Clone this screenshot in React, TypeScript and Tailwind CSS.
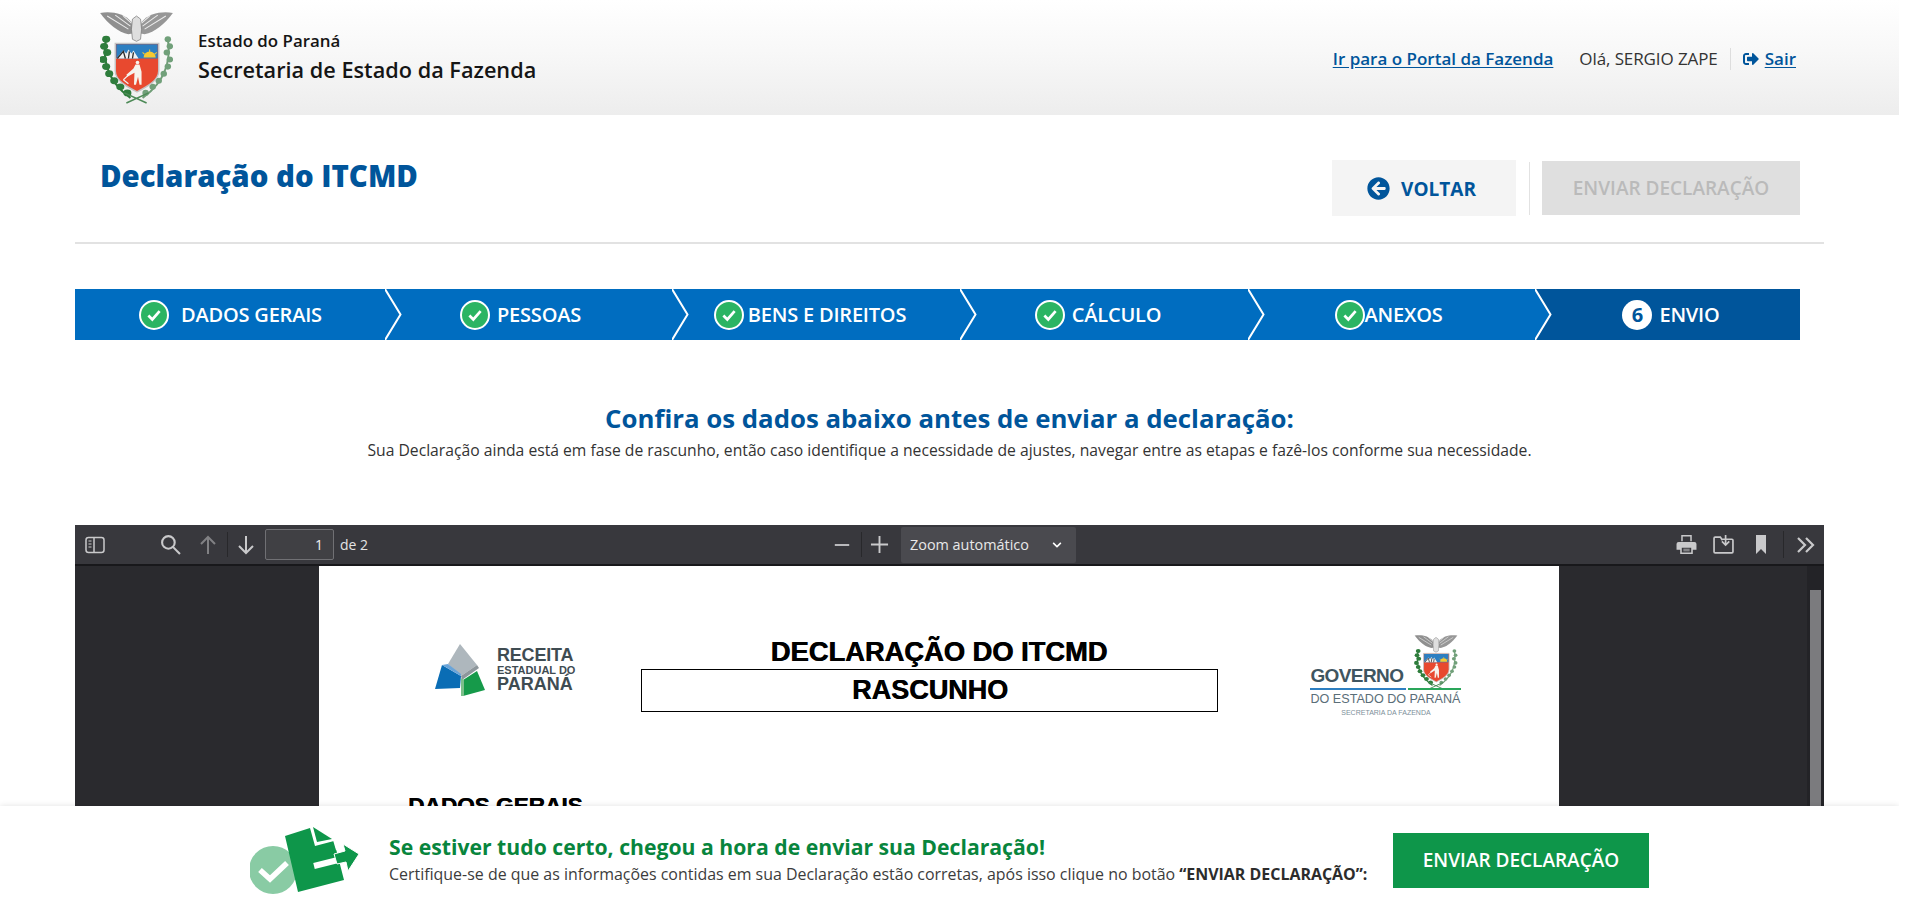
import { FaArrowCircleLeft, FaChevronDown, FaSignOutAlt } from "react-icons/fa";

function Brasao({ className }: { className: string }) {
  return (
    <svg viewBox="0 0 72 91" className={className}>
      {/* aguia */}
      <path d="M0 1 C10 -1 24 1 31 10 L33 21 L28 22 C18 20 8 12 0 1Z" fill="#8f8f8f" />
      <path d="M72 1 C62 -1 48 1 41 10 L39 21 L44 22 C54 20 64 12 72 1Z" fill="#979797" />
      <path d="M7 4 L28 17 M15 3 L30 14 M23 4 L31 11 M65 4 L44 17 M57 3 L42 14 M49 4 L41 11" stroke="#ececec" strokeWidth="1" />
      <path d="M32 7 L36 4 L40 7 L41 17 L40 27 L36 29 L32 27 L31 17Z" fill="#dedede" stroke="#777" strokeWidth="0.7" />
      {/* ramos */}
      <path d="M6 26 C2 45 6 68 30 85" fill="none" stroke="#2f7a3a" strokeWidth="2" />
      <path d="M67 26 C70 45 66 68 42 85" fill="none" stroke="#6f9d76" strokeWidth="2" />
      {[
        [6, 27], [4, 34], [7, 40], [3, 47], [6, 54], [9, 61], [14, 68], [20, 74], [27, 80],
      ].map(([x, y]) => (
        <ellipse key={`${x}-${y}`} cx={x} cy={y} rx="4" ry="3.4" fill="#2e7d3c" />
      ))}
      {[
        [67, 27], [69, 34], [66, 40], [69, 47], [67, 54], [63, 61], [58, 68], [52, 74], [45, 80],
      ].map(([x, y]) => (
        <ellipse key={`${x}-${y}`} cx={x} cy={y} rx="3.2" ry="3" fill="#71a07a" />
      ))}
      <path d="M24 80 L46 90 M48 80 L26 90" stroke="#4d8a57" strokeWidth="1.6" />
      {/* escudo */}
      <path d="M15 31 H58 V58 C58 68 46 74 36.5 79 C27 74 15 68 15 58Z" fill="#e8492f" stroke="#c4c4c4" strokeWidth="1.4" />
      <path d="M16 32 H57 V46 H16Z" fill="#2d7fc1" />
      <path d="M16 46 L23 38 L26 41 L28 37 L31 41 L33 38 L38 46Z" fill="#f2f2f2" />
      <path d="M17 46 L23 39 L25 46 M28 46 L29 39 M32 46 L33 40" stroke="#2c2c2c" strokeWidth="1.3" fill="none" />
      <path d="M43 45 A6 6 0 0 1 55 45Z" fill="#f6c931" />
      <path d="M42 40 L44 42 M49 37 V39.5 M56 40 L54 42" stroke="#f6c931" strokeWidth="1" />
      <circle cx="37" cy="50" r="1.8" fill="#f7f3ec" />
      <path d="M35 52 L39 52 L41 59 L41 72 L39 72 L37.5 64 L35.5 72 L33.5 72 L34 60 L27 64 L26 62 L33 56Z" fill="#f7f3ec" />
      <path d="M23 67 L35 56 M23 67 L28 71" stroke="#f2f2f2" strokeWidth="1.1" />
    </svg>
  );
}

function Check() {
  return (
    <span className="flex h-[30px] w-[30px] shrink-0 items-center justify-center rounded-full border-2 border-white bg-[#2bb463]">
      <svg viewBox="0 0 16 16" className="h-[18px] w-[18px]">
        <path d="M3 8.5 L6.5 12 L13 4.5" fill="none" stroke="#fff" strokeWidth="2.4" />
      </svg>
    </span>
  );
}

function Chevron({ fill }: { fill: string }) {
  return (
    <svg viewBox="0 0 17 51" className="absolute top-0 -right-[16px] z-10 h-[51px] w-[17px]">
      <polygon points="0,0 16,25.5 0,51" className={fill} />
      <polyline points="0,0 15.5,25.5 0,51" fill="none" stroke="#fff" strokeWidth="2" />
    </svg>
  );
}

const steps = [
  { label: "DADOS GERAIS", box: "w-[311px] gap-[12px]" },
  { label: "PESSOAS", box: "w-[287px] gap-[7px] pr-[18px]" },
  { label: "BENS E DIREITOS", box: "w-[288px] gap-[4px] pr-[14px]" },
  { label: "CÁLCULO", box: "w-[288px] gap-[7px] pr-[14px]" },
  { label: "ANEXOS", box: "w-[287px] pr-[8px] -space-x-[1px]" },
];

function Stepper() {
  return (
    <div className="mt-[45px] ml-[75px] flex h-[51px] w-[1725px] font-['Open_Sans',sans-serif] text-[20px] font-semibold tracking-[-0.2px] text-white">
      {steps.map((s) => (
        <div key={s.label} className={`relative flex h-full items-center justify-center bg-[#006dc0] ${s.box}`}>
          <Check />
          <span>{s.label}</span>
          <Chevron fill="fill-[#006dc0]" />
        </div>
      ))}
      <div className="flex h-full flex-1 items-center justify-center gap-[7px] bg-[#00559b] pl-[6px]">
        <span className="flex h-[30px] w-[30px] items-center justify-center rounded-full bg-white text-[20px] font-bold text-[#00559b]">
          6
        </span>
        <span>ENVIO</span>
      </div>
    </div>
  );
}

function Toolbar() {
  return (
    <div className="flex h-[41px] items-center border-b-2 border-[#18181b] bg-[#38383d] font-['Open_Sans',sans-serif] text-[#c9c9cb] *:shrink-0">
      <svg viewBox="0 0 20 18" className="ml-[10px] h-[18px] w-[20px]" fill="none" stroke="currentColor" strokeWidth="1.5">
        <rect x="1" y="1.5" width="18" height="15" rx="2.5" />
        <path d="M9 1.5 V16.5" />
        <path d="M3.5 5 H6.5 M3.5 8 H6.5 M3.5 11 H6.5" strokeWidth="1.1" />
      </svg>
      <svg viewBox="0 0 20 20" className="ml-[55px] h-[21px] w-[21px]" fill="none" stroke="currentColor" strokeWidth="2">
        <circle cx="8" cy="8" r="6" />
        <path d="M12.5 12.5 L19 19" />
      </svg>
      <svg viewBox="0 0 20 20" className="ml-[17px] h-[20px] w-[20px] opacity-50" fill="none" stroke="currentColor" strokeWidth="2">
        <path d="M10 19 V2 M3 9 L10 2 L17 9" />
      </svg>
      <span className="ml-[9px] h-[25px] w-px bg-[#28282b]" />
      <svg viewBox="0 0 20 20" className="ml-[8px] h-[20px] w-[20px]" fill="none" stroke="currentColor" strokeWidth="2">
        <path d="M10 1 V18 M3 11 L10 18 L17 11" />
      </svg>
      <span className="ml-[9px] flex h-[31px] w-[69px] items-center justify-end rounded-[2px] border border-[#707074] bg-[#404044] pr-[10px] text-[14px] text-[#f0f0f0]">
        1
      </span>
      <span className="ml-[6px] w-[30px] text-[14px] whitespace-nowrap text-[#e4e4e4]">de 2</span>

      <svg viewBox="0 0 20 20" className="ml-[463px] h-[18px] w-[18px]" fill="none" stroke="currentColor" strokeWidth="2">
        <path d="M2 10 H18" />
      </svg>
      <span className="ml-[10px] h-[25px] w-px bg-[#28282b]" />
      <svg viewBox="0 0 20 20" className="ml-[8px] h-[19px] w-[19px]" fill="none" stroke="currentColor" strokeWidth="2">
        <path d="M1 10 H19 M10 1 V19" />
      </svg>
      <span className="ml-[12px] flex h-[36px] w-[175px] items-center justify-between rounded-[2px] bg-[#4a4a4f] pr-[14px] pl-[9px] text-[14.4px] whitespace-nowrap text-[#e8e8e8]">
        Zoom automático
        <FaChevronDown className="h-[10px] w-[10px] text-white" />
      </span>

      <svg viewBox="0 0 20 20" className="ml-[600px] h-[21px] w-[21px]" fill="currentColor">
        <path d="M5 1 H15 V7 H13.6 V2.4 H6.4 V7 H5Z" />
        <path fillRule="evenodd" d="M2.5 7.5 H17.5 A2 2 0 0 1 19.5 9.5 V15 H16 V19 H4 V15 H0.5 V9.5 A2 2 0 0 1 2.5 7.5Z M5.5 13 V17.6 H14.5 V13Z" />
        <path d="M7 14.5 H13 M7 16 H13" stroke="currentColor" strokeWidth="0.7" />
      </svg>
      <svg viewBox="0 0 20 20" className="ml-[16px] h-[21px] w-[21px]" fill="none" stroke="currentColor" strokeWidth="1.6">
        <path d="M8 5 H18 A1 1 0 0 1 19 6 V17 A1 1 0 0 1 18 18 H2 A1 1 0 0 1 1 17 V4 A1 1 0 0 1 2 3 H7 L9 6" />
        <path d="M12 1 V10 M8.5 7 L12 10.5 L15.5 7" />
      </svg>
      <svg viewBox="0 0 12 20" className="ml-[21px] h-[20px] w-[12px]" fill="currentColor">
        <path d="M1 0 H11 V19 L6 14 L1 19Z" />
      </svg>
      <span className="ml-[16px] h-[27px] w-px bg-[#28282b]" />
      <svg viewBox="0 0 20 20" className="ml-[12px] h-[20px] w-[20px]" fill="none" stroke="currentColor" strokeWidth="2.2">
        <path d="M2 3 L9 10 L2 17 M10 3 L17 10 L10 17" />
      </svg>
    </div>
  );
}

function ReceitaLogo() {
  return (
    <div className="flex items-center gap-[12px]">
      <svg viewBox="0 0 50 52" className="h-[52px] w-[50px]">
        <polygon points="25,0 42,21 26,32 13,20" fill="#aeb7bd" />
        <polygon points="42,21 44,24 27,36 26,32" fill="#8e979c" />
        <polygon points="7,21 26,32 25,44 0,45" fill="#0a6db5" />
        <polygon points="7,21 13,20 26,30 26,32" fill="#6aa4d8" />
        <polygon points="28,36 42,27 50,46 28,52" fill="#169a4a" />
        <polygon points="26,34 29,36 29,52 26,52" fill="#7cbf8a" />
      </svg>
      <div className="font-['Liberation_Sans',sans-serif] text-[#3f4c52]">
        <div className="text-[18px] leading-[17px] font-bold tracking-[-0.2px]">RECEITA</div>
        <div className="text-[11px] leading-[12px] font-semibold">ESTADUAL DO</div>
        <div className="text-[18px] leading-[17px] font-bold">PARANÁ</div>
      </div>
    </div>
  );
}

function GovernoLogo() {
  return (
    <div className="flex w-[151px] flex-col font-['Liberation_Sans',sans-serif]">
      <div className="flex items-end justify-between">
        <span className="mb-[1px] text-[19px] leading-[21px] font-bold tracking-[-0.6px] text-[#3f5560]">GOVERNO</span>
        <Brasao className="mr-[3px] mb-[-2px] h-[54px] w-[44px]" />
      </div>
      <div className="mt-[1px] flex gap-[2px]">
        <span className="h-[2px] w-[96px] bg-[#2d7fc1]" />
        <span className="h-[2px] flex-1 bg-[#2aa65a]" />
      </div>
      <span className="mt-[1px] text-[12.6px] leading-[16px] whitespace-nowrap text-[#5a6e78]">DO ESTADO DO PARANÁ</span>
      <span className="mt-[1px] text-center text-[7px] leading-[10px] whitespace-nowrap text-[#7d8f9a]">SECRETARIA DA FAZENDA</span>
    </div>
  );
}

function PdfPage() {
  return (
    <div className="ml-[244px] flex h-[340px] w-[1240px] flex-col bg-white font-['Liberation_Sans',sans-serif] text-black">
      <div className="flex h-[115px] items-start pt-[68px]">
        <div className="mt-[10px] ml-[116px]">
          <ReceitaLogo />
        </div>
        <div className="ml-[66px] flex w-[577px] flex-col items-center">
          <div className="pl-[18px] text-[27.3px] leading-[35px] font-bold [text-shadow:0.7px_0_0_#000]">DECLARAÇÃO DO ITCMD</div>
          <div className="flex h-[43px] w-full items-center justify-center border border-black text-[27px] font-bold [text-shadow:0.7px_0_0_#000]">
            RASCUNHO
          </div>
        </div>
        <div className="mt-[1px] ml-[92px]">
          <GovernoLogo />
        </div>
      </div>
      <div className="mt-[112px] ml-[89px] text-[22.6px] leading-[26px] font-bold [text-shadow:0.6px_0_0_#000]">DADOS GERAIS</div>
    </div>
  );
}

function Viewer() {
  return (
    <div className="mx-[75px] mt-[63px] h-[400px] bg-[#2a2a2e]">
      <Toolbar />
      <div className="relative flex">
        <PdfPage />
        {/* barra de rolagem do pdf */}
        <div className="absolute top-0 right-0 h-full w-[17px] bg-[#232327]">
          <div className="mx-auto mt-[24px] h-[240px] w-[11px] bg-[#7b7b7e]" />
        </div>
      </div>
    </div>
  );
}

function Footer() {
  return (
    <footer className="absolute bottom-0 left-0 flex h-[107px] w-[1899px] items-center bg-white pl-[250px] shadow-[0_0_6px_rgba(0,0,0,0.12)]">
      <svg viewBox="0 0 112 72" className="h-[72px] w-[112px] shrink-0">
        <circle cx="23" cy="46" r="24" fill="#89cba4" />
        <path d="M10 46 L20 55 L37 39" fill="none" stroke="#fff" strokeWidth="5.5" />
        <polygon points="35,12 60,4 65,22 84,17 94,56 48,68" fill="#0e964a" />
        <polygon points="63,3 82,15 67,18" fill="#0e964a" />
        <path d="M64 42 L92 35" stroke="#fff" strokeWidth="6" />
        <path d="M84 16 L87 26" stroke="#fff" strokeWidth="2" />
        <polygon points="93,20 109,30 98,47 96,38 87,40 84,30 95,27" fill="#0e964a" stroke="#fff" strokeWidth="1" />
      </svg>
      <div className="ml-[27px] font-['Open_Sans',sans-serif]">
        <div className="text-[21.2px] leading-[28px] font-bold text-[#08853d]">Se estiver tudo certo, chegou a hora de enviar sua Declaração!</div>
        <div className="mt-[1px] text-[15.95px] leading-[25px] text-[#3c3c3c]">
          Certifique-se de que as informações contidas em sua Declaração estão corretas, após isso clique no botão{" "}
          <b className="font-bold text-[#2c2c2c]">“ENVIAR DECLARAÇÃO”:</b>
        </div>
      </div>
      <button className="absolute top-[27px] left-[1393px] h-[55px] w-[256px] bg-[#0e964a] font-['Open_Sans',sans-serif] text-[19px] font-semibold text-white">
        ENVIAR DECLARAÇÃO
      </button>
    </footer>
  );
}

export default function App() {
  return (
    <div className="relative h-[913px] w-[1899px] overflow-hidden bg-white font-['Open_Sans',sans-serif]">
      <header className="flex h-[115px] items-center bg-gradient-to-b from-white via-[#f7f7f7] to-[#ededed] pr-[103px] pl-[100px]">
        <Brasao className="h-[92px] w-[73px]" />
        <div className="ml-[25px] text-[#151515]">
          <div className="text-[16.9px] leading-[24px] font-semibold">Estado do Paraná</div>
          <div className="mt-[1px] text-[21.7px] leading-[32px] font-semibold">Secretaria de Estado da Fazenda</div>
        </div>
        <nav className="ml-auto flex items-center pt-[3px] text-[17px]">
          <a className="font-semibold text-[#00559b] underline underline-offset-2">Ir para o Portal da Fazenda</a>
          <span className="ml-[26px] text-[17px] tracking-[-0.1px] text-[#333]">Olá, SERGIO ZAPE</span>
          <span className="mx-[12px] h-[22px] w-px bg-[#ddd]" />
          <FaSignOutAlt className="h-[16px] w-[16px] text-[#00559b]" />
          <a className="ml-[6px] font-semibold text-[#00559b] underline underline-offset-2">Sair</a>
        </nav>
      </header>

      <div className="mx-[75px] flex h-[129px] items-start border-b-2 border-[#e2e2e2] pr-[24px] pl-[25px]">
        <h1 className="mt-[41px] text-[29.4px] leading-[40px] font-extrabold text-[#00559b]">Declaração do ITCMD</h1>
        <button className="mt-[45px] ml-auto flex h-[56px] w-[184px] items-center justify-center gap-[11px] bg-[#f4f4f4] pr-[5px] text-[19px] font-bold text-[#00559b]">
          <FaArrowCircleLeft className="h-[23px] w-[23px]" />
          <span className="pt-[3px]">VOLTAR</span>
        </button>
        <span className="mt-[47px] ml-[13px] h-[53px] w-px bg-[#e2e2e2]" />
        <button className="mt-[46px] ml-[12px] h-[54px] w-[258px] bg-[#dfdfdf] pt-[1px] text-[19px] font-semibold text-[#bababa]">
          ENVIAR DECLARAÇÃO
        </button>
      </div>

      <Stepper />

      <div className="mt-[60px] text-center">
        <h2 className="text-[25.8px] leading-[36px] font-bold text-[#00559b]">Confira os dados abaixo antes de enviar a declaração:</h2>
        <p className="mt-[2px] text-[15.7px] leading-[24px] text-[#333]">
          Sua Declaração ainda está em fase de rascunho, então caso identifique a necessidade de ajustes, navegar entre as etapas e fazê-los conforme sua necessidade.
        </p>
      </div>

      <Viewer />
      <Footer />
    </div>
  );
}
